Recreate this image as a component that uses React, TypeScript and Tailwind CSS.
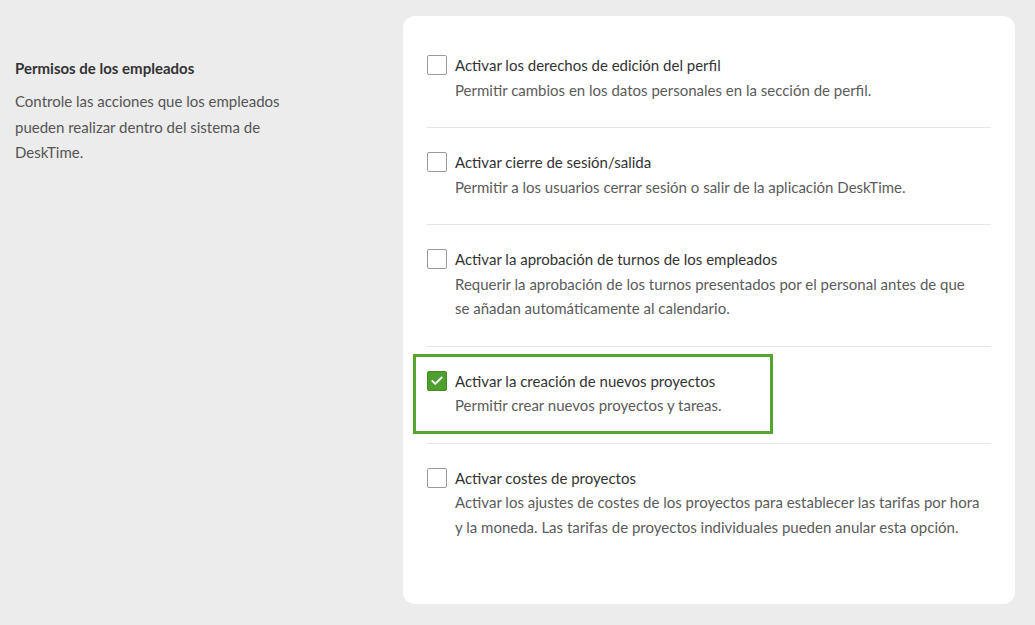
import { Check } from "lucide-react";

type Permission = {
  title: string;
  lines: string[];
  checked?: boolean;
  highlighted?: boolean;
};

const permissions: Permission[] = [
  {
    title: "Activar los derechos de edición del perfil",
    lines: ["Permitir cambios en los datos personales en la sección de perfil."],
  },
  {
    title: "Activar cierre de sesión/salida",
    lines: ["Permitir a los usuarios cerrar sesión o salir de la aplicación DeskTime."],
  },
  {
    title: "Activar la aprobación de turnos de los empleados",
    lines: [
      "Requerir la aprobación de los turnos presentados por el personal antes de que",
      "se añadan automáticamente al calendario.",
    ],
  },
  {
    title: "Activar la creación de nuevos proyectos",
    lines: ["Permitir crear nuevos proyectos y tareas."],
    checked: true,
    highlighted: true,
  },
  {
    title: "Activar costes de proyectos",
    lines: [
      "Activar los ajustes de costes de los proyectos para establecer las tarifas por hora",
      "y la moneda. Las tarifas de proyectos individuales pueden anular esta opción.",
    ],
  },
];

function Checkbox({ checked }: { checked?: boolean }) {
  return checked ? (
    <span className="mt-[2px] flex h-5 w-5 shrink-0 items-center justify-center rounded-[2px] border border-[#3f8a24] bg-[#4f9f2f]">
      <Check className="h-[14px] w-[14px] text-white" strokeWidth={3.2} />
    </span>
  ) : (
    <span className="mt-[2px] h-5 w-5 shrink-0 rounded-[2px] border border-[#9a9a9a] bg-white" />
  );
}

export default function App() {
  return (
    <div className="flex h-[625px] w-full bg-[#ebeceb] font-['Lato',sans-serif] text-[15px] leading-[24.5px]">
      {/* Texto de la sección */}
      <div className="w-[403px] shrink-0 pl-[15px] pt-[56px]">
        <h2 className="font-bold leading-[25px] text-[#333]">Permisos de los empleados</h2>
        <p className="mt-[8px] w-[290px] leading-[25.5px] text-[#555]">
          Controle las acciones que los empleados pueden realizar dentro del sistema de DeskTime.
        </p>
      </div>

      {/* Tarjeta de permisos */}
      <div className="mt-[16px] h-[588px] w-[612px] rounded-[12px] bg-white px-[24px] pt-[15px]">
        {permissions.map((p, i) => (
          <div
            key={p.title}
            className={`relative flex gap-[8px] pb-[25px] pt-[22px] ${
              i < permissions.length - 1 ? "border-b border-[#e6e6e6]" : ""
            }`}
          >
            {p.highlighted && (
              <div className="pointer-events-none absolute left-[-14px] top-[7px] h-[80px] w-[360px] border-[3px] border-[#55a52e]" />
            )}
            <Checkbox checked={p.checked} />
            <div>
              <p className="text-[#333]">{p.title}</p>
              <p className="text-[#5b5b5b]">
                {p.lines.map((line, j) => (
                  <span key={j} className="block whitespace-nowrap">
                    {line}
                  </span>
                ))}
              </p>
            </div>
          </div>
        ))}
      </div>
    </div>
  );
}
